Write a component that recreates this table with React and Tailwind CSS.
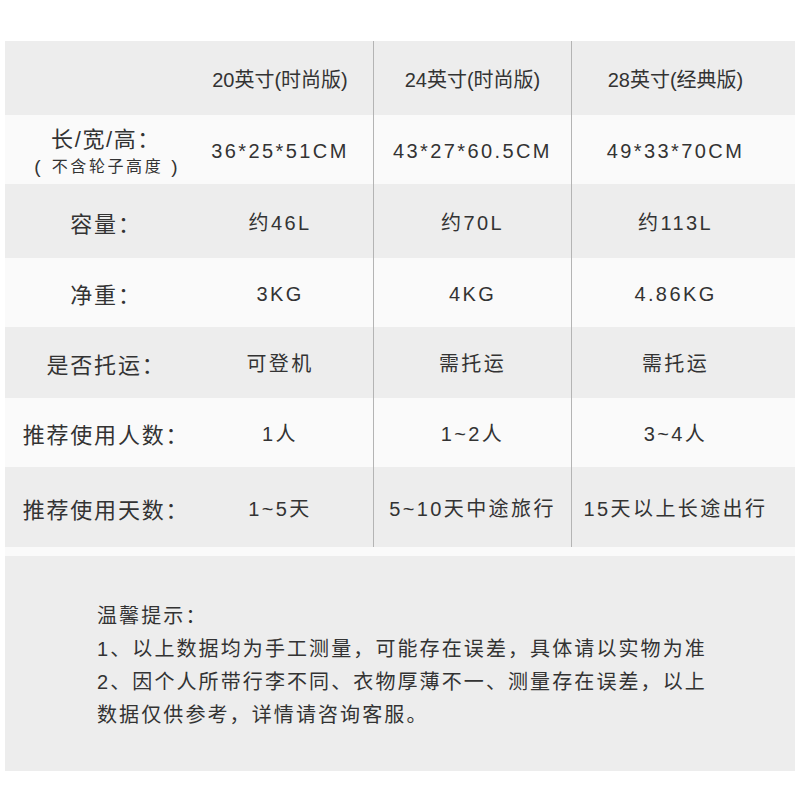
import React from "react";

const FONT = { fontFamily: '"Liberation Sans", "Noto Sans CJK SC", sans-serif' };

const rows = [
  { label: null, h: "h-[69px]", bg: "bg-[#fafafa]", values: ["36*25*51CM", "43*27*60.5CM", "49*33*70CM"] },
  { label: "容量：", h: "h-[74px]", bg: "bg-[#ededed]", values: ["约46L", "约70L", "约113L"] },
  { label: "净重：", h: "h-[69px]", bg: "bg-[#fafafa]", values: ["3KG", "4KG", "4.86KG"] },
  { label: "是否托运：", h: "h-[71px]", bg: "bg-[#ededed]", values: ["可登机", "需托运", "需托运"] },
  { label: "推荐使用人数：", h: "h-[69px]", bg: "bg-[#fafafa]", values: ["1人", "1~2人", "3~4人"] },
  { label: "推荐使用天数：", h: "h-[80px]", bg: "bg-[#ededed]", values: ["1~5天", "5~10天中途旅行", "15天以上长途出行"] },
];

function Row({ h, bg, label, values, header }) {
  const txt = header ? "text-[20px]" : "text-[20px] tracking-[2.4px]";
  return (
    <div className={`grid grid-cols-[182px_186px_198px_1fr] ${h} ${bg}`}>
      <div className="flex flex-col items-center justify-center whitespace-nowrap pl-[20px] pt-[6px] text-[#333]">
        {label === null ? (
          <>
            <div className="text-[22px] tracking-[1.6px] leading-[27px]">长/宽/高：</div>
            <div className="flex items-center text-[16px] tracking-[2.6px] leading-[27px]">
              <span className="mr-[11px] text-[19px] tracking-normal">(</span>
              <span>不含轮子高度</span>
              <span className="ml-[8px] text-[19px] tracking-normal">)</span>
            </div>
          </>
        ) : (
          <div className="text-[22px] tracking-[1.8px]">{label}</div>
        )}
      </div>
      <div className={`flex items-center justify-center pt-[3px] text-[#333] ${txt}`}>{values[0]}</div>
      <div className={`flex items-center justify-center border-l border-[#b4b4b4] pt-[3px] text-[#333] ${txt}`}>{values[1]}</div>
      <div className={`flex items-center justify-center border-l border-[#b4b4b4] pr-[16px] pt-[3px] text-[#333] ${txt}`}>{values[2]}</div>
    </div>
  );
}

export default function App() {
  return (
    <div className="w-[800px] h-[800px] bg-white px-[5px] pt-[41px]" style={FONT}>
      <Row header h="h-[74px]" bg="bg-[#ededed]" label="" values={["20英寸(时尚版)", "24英寸(时尚版)", "28英寸(经典版)"]} />
      {rows.map((r, i) => (
        <Row key={i} {...r} />
      ))}
      <div className="h-[9px] bg-[#fafafa]" />
      <div className="h-[215px] bg-[#ededed] pl-[92px] pt-[44px] text-[20px] leading-[33px] tracking-[2.1px] text-[#333]">
        <div>温馨提示：</div>
        <div>1、以上数据均为手工测量，可能存在误差，具体请以实物为准</div>
        <div>2、因个人所带行李不同、衣物厚薄不一、测量存在误差，以上</div>
        <div>数据仅供参考，详情请咨询客服。</div>
      </div>
    </div>
  );
}
